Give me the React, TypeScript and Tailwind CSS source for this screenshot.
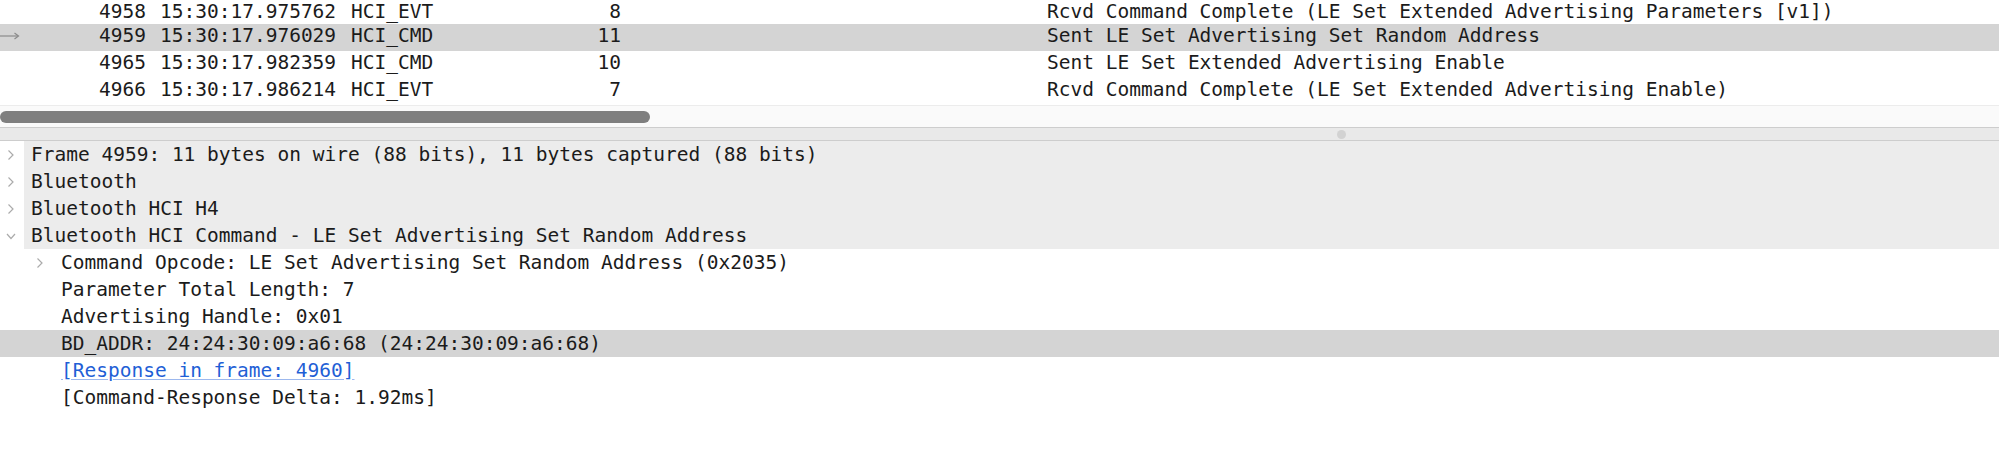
import React from 'react';

const packets = [
  { no: '4958', time: '15:30:17.975762', proto: 'HCI_EVT', len: '8', info: 'Rcvd Command Complete (LE Set Extended Advertising Parameters [v1])' },
  { no: '4959', time: '15:30:17.976029', proto: 'HCI_CMD', len: '11', info: 'Sent LE Set Advertising Set Random Address', selected: true },
  { no: '4965', time: '15:30:17.982359', proto: 'HCI_CMD', len: '10', info: 'Sent LE Set Extended Advertising Enable' },
  { no: '4966', time: '15:30:17.986214', proto: 'HCI_EVT', len: '7', info: 'Rcvd Command Complete (LE Set Extended Advertising Enable)' },
];

const topItems = [
  { label: 'Frame 4959: 11 bytes on wire (88 bits), 11 bytes captured (88 bits)', open: false },
  { label: 'Bluetooth', open: false },
  { label: 'Bluetooth HCI H4', open: false },
  { label: 'Bluetooth HCI Command - LE Set Advertising Set Random Address', open: true },
];

function Chevron({ open }: { open: boolean }) {
  return (
    <svg width="10" height="12" viewBox="0 0 10 12" className="block">
      {open ? (
        <polyline points="1,4 5,8.5 9,4" fill="none" stroke="#ababab" strokeWidth="1.2" />
      ) : (
        <polyline points="2.5,1.5 7,6 2.5,10.5" fill="none" stroke="#ababab" strokeWidth="1.2" />
      )}
    </svg>
  );
}

function RowArrow() {
  return (
    <svg width="20" height="8" viewBox="0 0 20 8" className="block">
      <line x1="0" y1="4" x2="18" y2="4" stroke="#8a8a8a" strokeWidth="1.2" />
      <polyline points="14.5,1 18.5,4 14.5,7" fill="none" stroke="#8a8a8a" strokeWidth="1.2" />
    </svg>
  );
}

export default function App() {
  return (
    <div className="w-[1999px] h-[466px] overflow-hidden bg-white text-[#1b1b1b] text-[19.5px] font-['DejaVu_Sans_Mono','Liberation_Mono',monospace]">
      {/* packet list, first row partly scrolled out of view */}
      <div className="h-[105px] overflow-hidden">
        {packets.map((p, i) => (
          <div
            key={p.no}
            className={`flex whitespace-pre ${i === 0 ? 'h-[24px] leading-[23px]' : 'h-[27px] leading-[24px]'} ${p.selected ? 'bg-[#d4d4d4]' : 'bg-white'}`}
          >
            <div className="w-[24px] flex items-center pb-[3px]">{p.selected && <RowArrow />}</div>
            <div className="w-[122px] text-right">{p.no}</div>
            <div className="w-[205px] pl-[14px]">{p.time}</div>
            <div className="w-[100px]">{p.proto}</div>
            <div className="w-[170px] text-right">{p.len}</div>
            <div className="pl-[426px]">{p.info}</div>
          </div>
        ))}
      </div>

      {/* horizontal scrollbar */}
      <div className="h-[22px] border-t border-[#ececec] bg-[#fafafa]">
        <div className="mt-[5px] h-[12px] w-[650px] rounded-full bg-[#7f7f7f]" />
      </div>

      {/* splitter */}
      <div className="flex h-[14px] items-center border-y border-[#cdcdcd] bg-[#e9e9e9]">
        <div className="ml-[1337px] h-[9px] w-[9px] rounded-full bg-[#d2d2d2]" />
      </div>

      {/* packet details */}
      <div className="leading-[27px] whitespace-pre">
        {topItems.map((t) => (
          <div key={t.label} className="flex h-[27px]">
            <div className="w-[24px] flex items-center pl-[6px]">
              <Chevron open={t.open} />
            </div>
            <div className="flex-1 bg-[#ececec] pl-[7px]">{t.label}</div>
          </div>
        ))}
        <div className="flex h-[27px]">
          <div className="w-[61px] flex items-center pl-[35px]">
            <Chevron open={false} />
          </div>
          <div>Command Opcode: LE Set Advertising Set Random Address (0x2035)</div>
        </div>
        <div className="h-[27px] pl-[61px]">Parameter Total Length: 7</div>
        <div className="h-[27px] pl-[61px]">Advertising Handle: 0x01</div>
        <div className="h-[27px] pl-[61px] bg-[#d4d4d4]">BD_ADDR: 24:24:30:09:a6:68 (24:24:30:09:a6:68)</div>
        <div className="h-[27px] pl-[61px]">
          <span className="text-[#1f5fd6] underline decoration-[#9cb8ee] underline-offset-[2px]">[Response in frame: 4960]</span>
        </div>
        <div className="h-[27px] pl-[61px]">[Command-Response Delta: 1.92ms]</div>
      </div>
    </div>
  );
}
